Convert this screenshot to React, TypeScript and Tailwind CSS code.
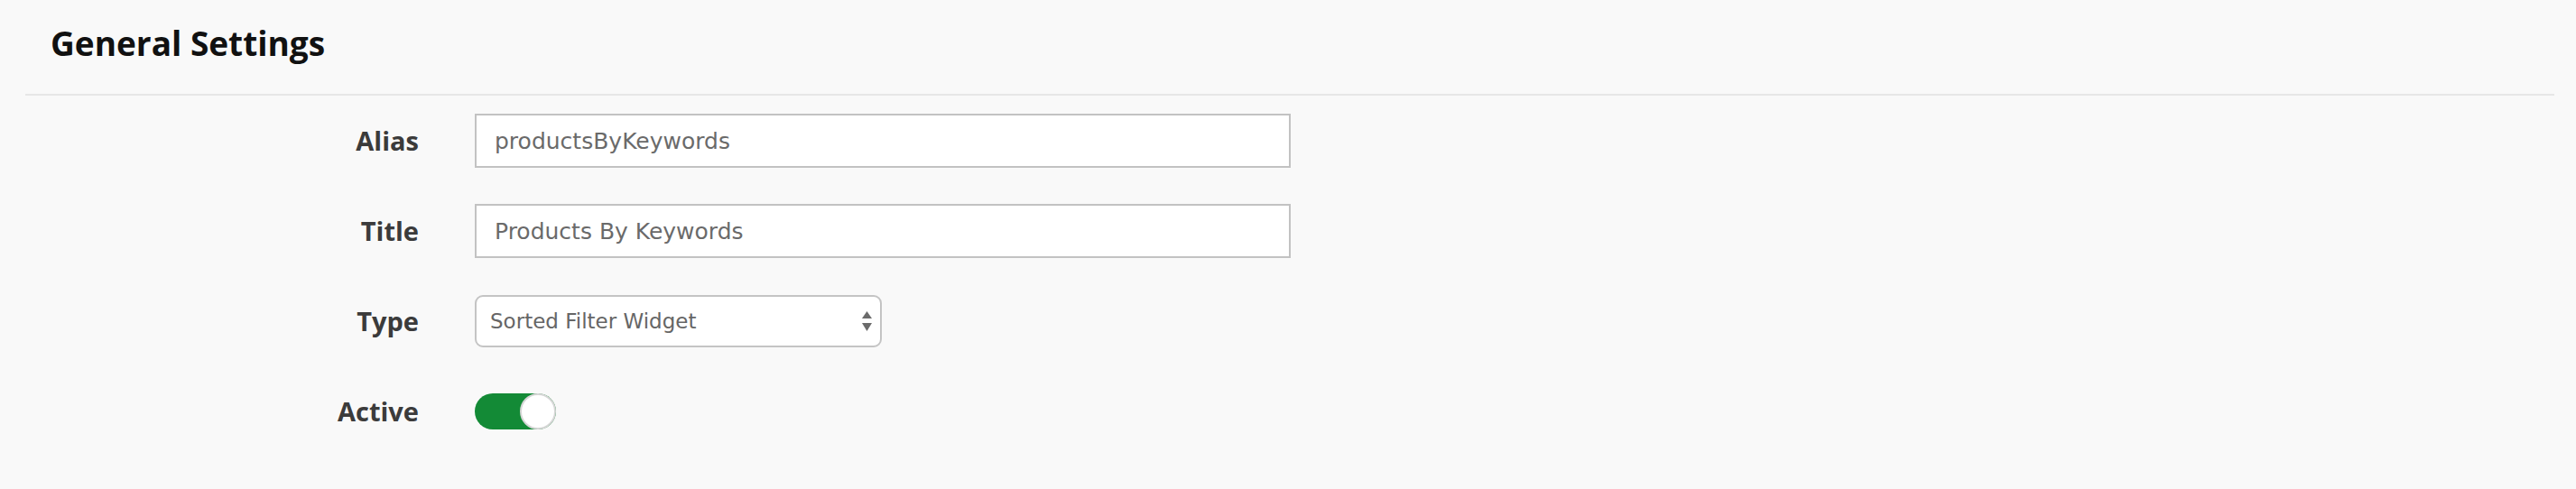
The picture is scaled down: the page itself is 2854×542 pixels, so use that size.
import React from 'react';

/* ── form row: right-aligned label + control ─────────────────── */
function FormRow({ label, children, className = '' }: { label: string; children: React.ReactNode; className?: string }) {
  return (
    <div className={`flex items-center ${className}`}>
      <label className="w-[464px] shrink-0 text-right text-[29px] font-bold text-[#3b3b3b] font-['Open_Sans',sans-serif]">
        {label}
      </label>
      <div className="ml-[62px] flex items-center">{children}</div>
    </div>
  );
}

function TextInput({ value }: { value: string }) {
  return (
    <input
      type="text"
      defaultValue={value}
      className="h-[60px] w-[904px] border-2 border-[#c2c2c2] bg-white px-[20px] text-[25px] text-[#6a6a6a] outline-none font-['DejaVu_Sans',sans-serif]"
    />
  );
}

export default function App() {
  const [active, setActive] = React.useState(true);

  return (
    <div className="min-h-screen w-full bg-[#f9f9f9]">
      {/* ── Header ── */}
      <h1 className="pl-[56px] pt-[30px] text-[37px] leading-[36px] font-bold text-[#111] font-['Open_Sans',sans-serif]">
        General Settings
      </h1>
      <div className="mt-[38px] ml-[28px] mr-[24px] h-[2px] bg-[#e7e7e7]" />

      {/* ── Fields ── */}
      <div className="pt-[20px]">
        <FormRow label="Alias">
          <TextInput value="productsByKeywords" />
        </FormRow>

        <FormRow label="Title" className="mt-[40px]">
          <TextInput value="Products By Keywords" />
        </FormRow>

        <FormRow label="Type" className="mt-[41px]">
          <div className="flex h-[58px] w-[451px] items-center justify-between rounded-[9px] border-2 border-[#c4c4c4] bg-white pl-[15px] pr-[9px] text-[23px] text-[#666] font-['DejaVu_Sans',sans-serif]">
            <span>Sorted Filter Widget</span>
            <svg width="11" height="22" viewBox="0 0 11 22" className="fill-[#6b6b6b]">
              <polygon points="5.5,0 11,8 0,8" />
              <polygon points="0,13 11,13 5.5,22" />
            </svg>
          </div>
        </FormRow>

        <FormRow label="Active" className="mt-[49px]">
          <button
            type="button"
            onClick={() => setActive(!active)}
            className={`flex h-[40px] w-[90px] items-center rounded-full p-0 ${
              active ? 'justify-end bg-[#138a36]' : 'justify-start bg-[#d5d5d5]'
            }`}
          >
            <span className="h-[40px] w-[40px] rounded-full border-2 border-[#d6d6d6] bg-white" />
          </button>
        </FormRow>
      </div>
    </div>
  );
}
